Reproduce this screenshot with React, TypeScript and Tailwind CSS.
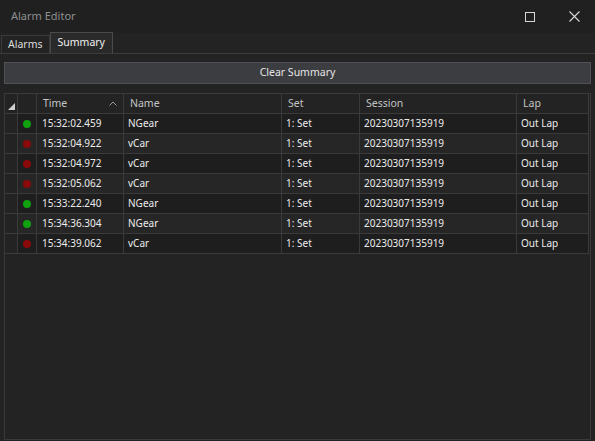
import React from "react";

const rows = [
  { ok: true, time: "15:32:02.459", name: "NGear" },
  { ok: false, time: "15:32:04.922", name: "vCar" },
  { ok: false, time: "15:32:04.972", name: "vCar" },
  { ok: false, time: "15:32:05.062", name: "vCar" },
  { ok: true, time: "15:33:22.240", name: "NGear" },
  { ok: true, time: "15:34:36.304", name: "NGear" },
  { ok: false, time: "15:34:39.062", name: "vCar" },
];

const font = { fontFamily: '"Noto Sans", "Open Sans", sans-serif' };

export default function App() {
  return (
    <div
      className="w-[595px] h-[441px] bg-[#232323] text-[10px] text-[#ececec] flex flex-col overflow-hidden"
      style={font}
    >
      {/* title bar */}
      <div className="h-[33px] bg-[#202020] flex items-center pl-[11px] shrink-0">
        <span className="text-[11px] text-[#8f8f8f] flex-1">Alarm Editor</span>
        <div className="w-[10px] h-[10px] border border-[#d8d8d8] mr-[34px]" />
        <svg width="11" height="11" viewBox="0 0 11 11" className="mr-[15px]">
          <path d="M0.5 0.5 L10.5 10.5 M10.5 0.5 L0.5 10.5" stroke="#d8d8d8" strokeWidth="1.1" />
        </svg>
      </div>

      {/* tabs */}
      <div className="h-[21px] flex items-end border-b border-[#3c3c3c] shrink-0 pl-px">
        <div className="h-[18px] px-[6px] flex items-center border border-b-0 border-[#3a3a3a] text-[#dcdcdc] text-[10.5px]">
          Alarms
        </div>
        <div className="h-[21px] px-[7px] flex items-center border border-b-0 border-[#4a4a4a] bg-[#2a2a2a] text-[#f0f0f0] text-[10.5px]">
          Summary
        </div>
      </div>

      <div className="flex-1 flex flex-col px-[4px] pt-[8px] pb-px">
        <button className="h-[22px] w-full bg-[#3c3d40] border border-[#505155] text-[#e6e6e6] text-[10.5px]">
          Clear Summary
        </button>

        <div className="mt-[9px] flex-1 border border-[#3a3a3a] bg-[#232323] pr-[1px]">
          {/* header */}
          <div className="flex h-[20px] border-b border-[#3a3a3a] text-[#c4c4c4] text-[10.5px]">
            <div className="w-[13px] border-r border-[#3a3a3a] flex items-end justify-center pb-[3px]">
              <svg width="7" height="7" viewBox="0 0 7 7">
                <path d="M7 0 L7 7 L0 7 Z" fill="#cfcfcf" />
              </svg>
            </div>
            <div className="w-[19px] border-r border-[#3a3a3a]" />
            <div className="w-[87px] border-r border-[#3a3a3a] flex items-center pl-[6px] pr-[6px]">
              <span className="flex-1">Time</span>
              <svg width="8" height="5" viewBox="0 0 8 5">
                <path d="M0.5 4.5 L4 1 L7.5 4.5" stroke="#9a9a9a" fill="none" strokeWidth="1" />
              </svg>
            </div>
            <div className="w-[158px] border-r border-[#3a3a3a] flex items-center pl-[6px]">Name</div>
            <div className="w-[78px] border-r border-[#3a3a3a] flex items-center pl-[6px]">Set</div>
            <div className="w-[157px] border-r border-[#3a3a3a] flex items-center pl-[6px]">Session</div>
            <div className="w-[72px] border-r border-[#3a3a3a] flex items-center pl-[6px]">Lap</div>
          </div>

          {rows.map((r, i) => (
            <div
              key={i}
              className={`flex h-[20px] border-b border-[#3a3a3a] ${i % 2 === 0 ? "bg-[#1e1e1e]" : "bg-[#262626]"}`}
            >
              <div className="w-[13px] border-r border-[#3a3a3a] bg-[#232323]" />
              <div className="w-[19px] border-r border-[#3a3a3a] flex items-center justify-center">
                <div className={`w-[8px] h-[8px] rounded-full ${r.ok ? "bg-[#10a010]" : "bg-[#8a0a0a]"}`} />
              </div>
              <div className="w-[87px] border-r border-[#3a3a3a] flex items-center pl-[5px]">{r.time}</div>
              <div className="w-[158px] border-r border-[#3a3a3a] flex items-center pl-[4px]">{r.name}</div>
              <div className="w-[78px] border-r border-[#3a3a3a] flex items-center pl-[4px]">1: Set</div>
              <div className="w-[157px] border-r border-[#3a3a3a] flex items-center pl-[4px]">20230307135919</div>
              <div className="w-[72px] border-r border-[#3a3a3a] flex items-center pl-[4px]">Out Lap</div>
            </div>
          ))}
        </div>
      </div>
    </div>
  );
}
